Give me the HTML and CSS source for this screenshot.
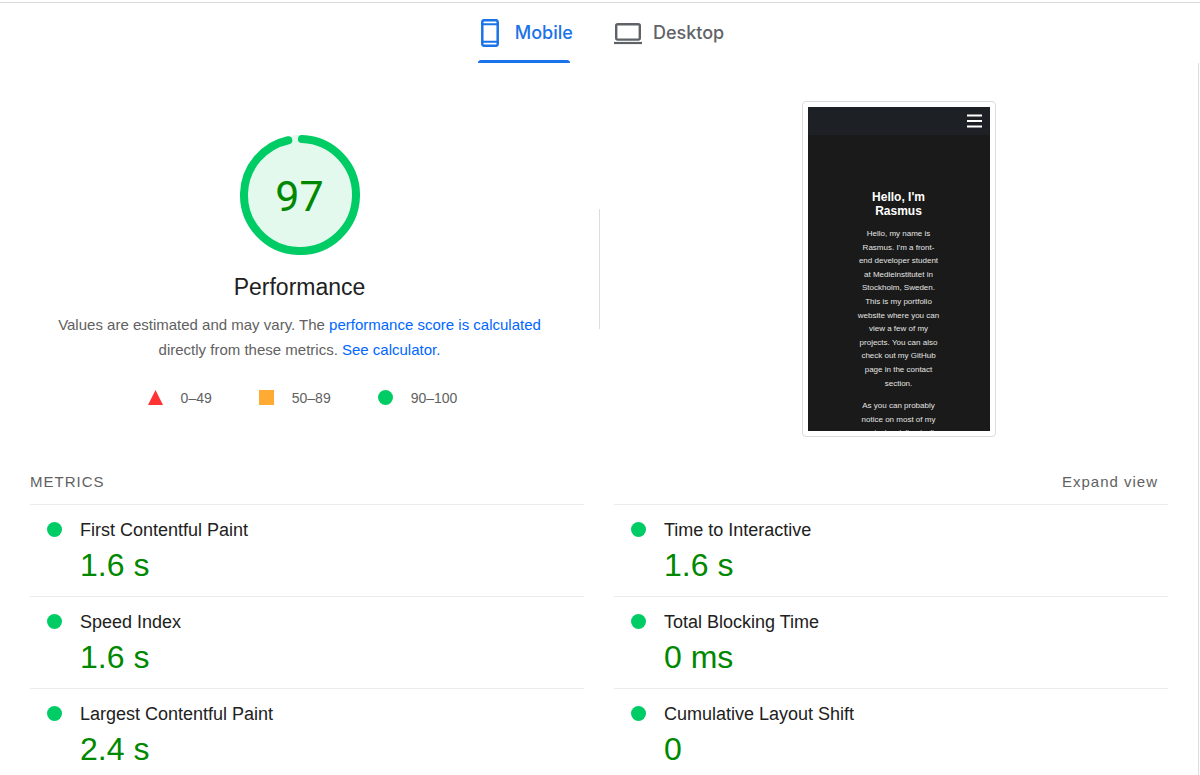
FILE: index.html
```html
<!DOCTYPE html>
<html lang="en">
<head>
<meta charset="utf-8">
<title>Performance report</title>
<link rel="stylesheet" href="styles.css">
</head>
<body>
<nav class="tabs" role="tablist" aria-label="Device">
  <button class="tab tab-active" role="tab" aria-selected="true">
    <svg class="tab-icon" viewBox="0 0 28 28" width="28" height="28" aria-hidden="true"><rect x="6.300" y="1.200" width="15.400" height="25.600" rx="1.800" fill="none" stroke="currentColor" stroke-width="2.500"/><path d="M5 5.200h18M5 22.800h18" stroke="currentColor" stroke-width="2"/></svg>
    <span>Mobile</span>
  </button>
  <button class="tab" role="tab" aria-selected="false">
    <svg class="tab-icon" viewBox="0 0 28 28" width="28" height="28" aria-hidden="true"><rect x="2.200" y="5.200" width="23.600" height="15.400" rx="1.500" fill="none" stroke="currentColor" stroke-width="2.400"/><path d="M0 24h28" stroke="currentColor" stroke-width="2.200"/></svg>
    <span>Desktop</span>
  </button>
</nav>
<main class="report">
  <section class="summary">
    <div class="score">
      <div class="gauge">
        <svg class="gauge-ring" viewBox="0 0 120 120" aria-hidden="true"><circle cx="60" cy="60" r="60" fill="#e3f9ee"/><circle cx="60" cy="60" r="56" fill="none" stroke="#0c6" stroke-width="8" stroke-linecap="round" stroke-dasharray="337.500 352" transform="rotate(-88 60 60)"/></svg>
        <span class="gauge-value">97</span>
      </div>
      <h1 class="score-title">Performance</h1>
      <p class="score-note">Values are estimated and may vary. The <a href="#score">performance score is calculated</a> directly from these metrics. <a href="#calculator">See calculator.</a></p>
      <ul class="legend">
        <li><svg class="mark" viewBox="0 0 15 15" aria-hidden="true"><path d="M7.500 0L15 15H0z" fill="#f33"/></svg>0–49</li>
        <li><svg class="mark" viewBox="0 0 15 15" aria-hidden="true"><path d="M0 0h15v15H0z" fill="#fa3"/></svg>50–89</li>
        <li><svg class="mark" viewBox="0 0 15 15" aria-hidden="true"><circle cx="7.500" cy="7.500" r="7.500" fill="#0c6"/></svg>90–100</li>
      </ul>
    </div>
    <div class="preview">
      <div class="phone">
        <div class="phone-bar"><svg viewBox="0 0 16 14" width="16" height="14" aria-hidden="true"><path d="M0 1.500h15M0 7h15M0 12.500h15" stroke="#fff" stroke-width="2"/></svg></div>
        <div class="phone-body">
          <h2>Hello, I'm<br>Rasmus</h2>
          <p>Hello, my name is<br>Rasmus. I'm a front-<br>end developer student<br>at Medieinstitutet in<br>Stockholm, Sweden.<br>This is my portfolio<br>website where you can<br>view a few of my<br>projects. You can also<br>check out my GitHub<br>page in the contact<br>section.</p>
          <p>As you can probably<br>notice on most of my<br>projects, styling isn't</p>
        </div>
      </div>
    </div>
  </section>
  <section class="metrics">
    <div class="metrics-head">
      <h2 class="metrics-title">METRICS</h2>
      <button class="expand">Expand view</button>
    </div>
    <dl class="metric-grid">
      <div class="metric"><dt>First Contentful Paint</dt><dd>1.6 s</dd></div>
      <div class="metric"><dt>Time to Interactive</dt><dd>1.6 s</dd></div>
      <div class="metric"><dt>Speed Index</dt><dd>1.6 s</dd></div>
      <div class="metric"><dt>Total Blocking Time</dt><dd>0 ms</dd></div>
      <div class="metric"><dt>Largest Contentful Paint</dt><dd>2.4 s</dd></div>
      <div class="metric"><dt>Cumulative Layout Shift</dt><dd>0</dd></div>
    </dl>
  </section>
</main>
</body>
</html>
```

FILE: styles.css
```css
* { box-sizing: border-box; }

body {
  margin: 0;
  padding-top: 2px;
  min-height: 100vh;
  display: flex;
  flex-direction: column;
  background: #fff;
  color: #212121;
  font-family: "Liberation Sans", Arial, sans-serif;
}

h1, h2, p, ul, dl, dd { margin: 0; padding: 0; font-weight: normal; }
button { padding: 0; border: 0; background: none; cursor: pointer; }

.tabs {
  display: flex;
  justify-content: center;
  gap: 41px;
  border-top: 1px solid #dadce0;
}

.tab {
  display: flex;
  align-items: center;
  gap: 11px;
  height: 60px;
  color: #5f6368;
  font: 500 18px/24px Inter, sans-serif;
}

.tab-active {
  position: relative;
  color: #1a73e8;
}

.tab-active::after {
  content: "";
  position: absolute;
  left: 2px;
  right: 3px;
  bottom: 0;
  height: 3px;
  border-radius: 3px 3px 0 0;
  background: #1a73e8;
}

.report {
  flex: 1;
  margin-right: 1px;
  border-right: 1px solid #dadce0;
}

.summary {
  display: grid;
  grid-template-columns: 1fr 1fr;
  align-items: center;
  padding-top: 38px;
}

.score {
  display: flex;
  flex-direction: column;
  align-items: center;
  padding-top: 6px;
}

.gauge {
  display: grid;
  place-items: center;
  width: 120px;
  height: 120px;
}

.gauge-ring, .gauge-value { grid-area: 1 / 1; }

.gauge-value {
  padding-top: 2px;
  color: #080;
  font: 43px/48px Roboto, sans-serif;
}

.score-title {
  margin-top: 16px;
  font-size: 23px;
  line-height: 32px;
}

.score-note {
  max-width: 490px;
  margin-top: 9px;
  color: #616161;
  font-size: 15px;
  line-height: 25px;
  text-align: center;
}

.score-note a { color: #0066fe; text-decoration: none; }

.legend {
  display: flex;
  gap: 47px;
  margin-top: 24px;
  padding-left: 6px;
  color: #616161;
  font-size: 14px;
  line-height: 24px;
  list-style: none;
}

.legend li { display: flex; align-items: center; gap: 18px; }
.mark { width: 15px; height: 15px; }

.preview {
  display: flex;
  justify-content: center;
  background: linear-gradient(#dadce0, #dadce0) left center / 1px 120px no-repeat;
}

.phone {
  width: 194px;
  height: 336px;
  padding: 5px;
  border: 1px solid #dadce0;
  border-radius: 4px;
  color: #e4e4e4;
  text-align: center;
}

.phone-bar {
  display: flex;
  align-items: center;
  justify-content: flex-end;
  height: 28px;
  padding-right: 7px;
  background: #1d2125;
}

.phone-body {
  height: 296px;
  padding-top: 55px;
  overflow: hidden;
  background: #191a19;
}

.phone-body h2 {
  color: #fff;
  font-size: 12px;
  font-weight: bold;
  line-height: 14px;
}

.phone-body p {
  margin-top: 9px;
  font-size: 8px;
  line-height: 1.7;
}

.metrics { padding: 28px 30px 0; }

.metrics-head {
  display: flex;
  justify-content: space-between;
  padding: 5px 10px 10px 0;
}

.metrics-title, .expand {
  color: #616161;
  font: 15px/24px "Liberation Sans", Arial, sans-serif;
  letter-spacing: 1px;
}

.metric-grid {
  display: grid;
  grid-template-columns: 1fr 1fr;
  column-gap: 30px;
}

.metric {
  padding: 13px 0 9px 50px;
  border-top: 1px solid #ebebeb;
}

.metric:nth-last-child(-n+2) { padding-bottom: 0; }

.metric dt {
  display: flex;
  align-items: center;
  gap: 18px;
  margin-left: -33px;
  font-size: 18px;
  line-height: 24px;
}

.metric dt::before {
  content: "";
  width: 15px;
  height: 15px;
  margin-bottom: 2px;
  border-radius: 50%;
  background: #0c6;
}

.metric dd {
  padding-top: 2px;
  color: #080;
  font-size: 32px;
  line-height: 43px;
}
```
